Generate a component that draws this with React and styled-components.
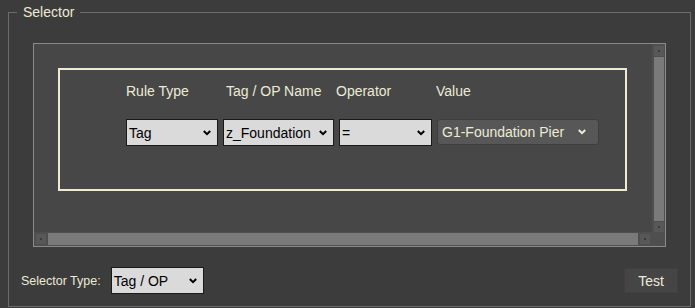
import React from "react";
import styled, { createGlobalStyle } from "styled-components";

const GlobalStyle = createGlobalStyle`
  html, body { margin: 0; padding: 0; }
  body {
    background: #3c3c3c;
    font-family: "Liberation Sans", Arial, sans-serif;
  }
`;

const Page = styled.div`
  width: 695px;
  height: 308px;
  box-sizing: border-box;
  padding: 3px 4px 0 8px;
`;

const Frame = styled.fieldset`
  margin: 0;
  padding: 0;
  width: 683px;
  height: 304px;
  box-sizing: border-box;
  border: 1px solid #6c6c6c;
  min-width: 0;
  display: flex;
  flex-direction: column;
`;

const Legend = styled.legend`
  margin-left: 8px;
  padding: 0 6px;
  font-size: 14px;
  line-height: 18px;
  color: #ecebd6;
`;

const Panel = styled.div`
  margin: 22px 24px 0 24px;
  height: 204px;
  box-sizing: border-box;
  border: 1px solid #8a8a8a;
  background: #474747;
  display: grid;
  grid-template-columns: 1fr 13px;
  grid-template-rows: 1fr 14px;
`;

const Content = styled.div`
  padding: 24px 0 0 24px;
  overflow: hidden;
`;

const VScroll = styled.div`
  background: #4f4f4f;
  display: flex;
  flex-direction: column;
  align-items: center;
  padding: 2px 0 0 0;
  gap: 1px;
`;

const HScroll = styled.div`
  background: #4f4f4f;
  display: flex;
  align-items: center;
  padding: 0 2px;
  gap: 2px;
`;

const Corner = styled.div`
  background: #4f4f4f;
`;

const ScrollBtn = styled.div`
  width: 10px;
  height: 10px;
  flex: none;
  background: #585858;
  display: flex;
  align-items: center;
  justify-content: center;
  &::after {
    content: "";
    width: 2px;
    height: 2px;
    background: #3a3a3a;
  }
`;

const Thumb = styled.div`
  background: #7a7a7a;
  flex: 1;
  ${(p) => (p.$vertical ? "width: 10px;" : "height: 12px;")}
`;

const RuleBox = styled.div`
  width: 569px;
  height: 123px;
  box-sizing: border-box;
  border: 2px solid #ecebcf;
  padding: 12px 0 0 66px;
  display: flex;
  flex-direction: column;
  gap: 19px;
`;

const HeaderRow = styled.div`
  display: grid;
  grid-template-columns: 100px 110px 100px auto;
`;

const HeaderLabel = styled.div`
  font-size: 14px;
  line-height: 18px;
  color: #ecebd6;
  white-space: nowrap;
`;

const FieldRow = styled.div`
  display: flex;
  gap: 5px;
`;

const Select = styled.div`
  width: ${(p) => p.$w}px;
  height: 27px;
  box-sizing: border-box;
  border: 1px solid #1a1a1a;
  background: #dadada;
  color: #000;
  font-size: 14px;
  display: flex;
  align-items: center;
  justify-content: space-between;
  padding: 0 6px 0 2px;
  white-space: nowrap;
`;

const DarkSelect = styled.div`
  width: ${(p) => p.$w}px;
  height: 26px;
  box-sizing: border-box;
  border: 1px solid #3e3e3e;
  border-radius: 3px;
  background: #575757;
  color: #ecebd6;
  font-size: 14px;
  display: flex;
  align-items: center;
  justify-content: space-between;
  padding: 0 12px 0 4px;
  white-space: nowrap;
`;

const BottomRow = styled.div`
  margin-top: 20px;
  padding: 0 12px;
  display: flex;
  align-items: center;
  justify-content: space-between;
`;

const SelectorGroup = styled.div`
  display: flex;
  align-items: center;
  gap: 10px;
`;

const SmallLabel = styled.span`
  font-size: 12.5px;
  color: #ecebd6;
`;

const Button = styled.div`
  width: 54px;
  height: 25px;
  box-sizing: border-box;
  background: #454545;
  border: 1px solid #404040;
  color: #ecebd6;
  font-size: 14px;
  display: flex;
  align-items: center;
  justify-content: center;
`;

const Chevron = ({ color = "#000" }) => (
  <svg width="8" height="6" viewBox="0 0 8 6">
    <path d="M0.8 1 L4 4.2 L7.2 1" fill="none" stroke={color} strokeWidth="2" />
  </svg>
);

export default function App() {
  return (
    <>
      <GlobalStyle />
      <Page>
        <Frame>
          <Legend>Selector</Legend>
          <Panel>
            <Content>
              <RuleBox>
                <HeaderRow>
                  <HeaderLabel>Rule Type</HeaderLabel>
                  <HeaderLabel>Tag / OP Name</HeaderLabel>
                  <HeaderLabel>Operator</HeaderLabel>
                  <HeaderLabel>Value</HeaderLabel>
                </HeaderRow>
                <FieldRow>
                  <Select $w={92}>
                    <span>Tag</span>
                    <Chevron />
                  </Select>
                  <Select $w={111}>
                    <span>z_Foundation</span>
                    <Chevron />
                  </Select>
                  <Select $w={93}>
                    <span>=</span>
                    <Chevron />
                  </Select>
                  <DarkSelect $w={162}>
                    <span>G1-Foundation Pier</span>
                    <Chevron color="#ecebd6" />
                  </DarkSelect>
                </FieldRow>
              </RuleBox>
            </Content>
            <VScroll>
              <ScrollBtn />
              <Thumb $vertical />
              <ScrollBtn />
            </VScroll>
            <HScroll>
              <ScrollBtn />
              <Thumb />
              <ScrollBtn />
            </HScroll>
            <Corner />
          </Panel>
          <BottomRow>
            <SelectorGroup>
              <SmallLabel>Selector Type:</SmallLabel>
              <Select $w={93}>
                <span>Tag / OP</span>
                <Chevron />
              </Select>
            </SelectorGroup>
            <Button>Test</Button>
          </BottomRow>
        </Frame>
      </Page>
    </>
  );
}
